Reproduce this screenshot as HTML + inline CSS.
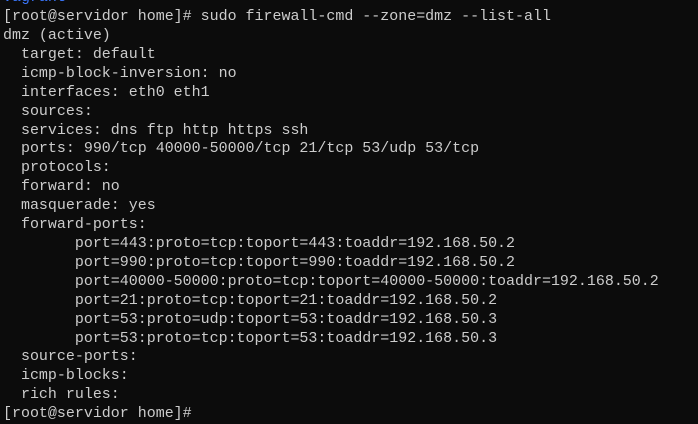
<!DOCTYPE html>
<html><head><style>
html,body{margin:0;padding:0;background:#0c0c0c;width:698px;height:422px;overflow:hidden}
pre{position:absolute;left:3px;top:-10.8px;margin:0;font-family:"Liberation Mono",monospace;font-size:14.98px;line-height:18.9px;color:#cccccc}
.b{color:#3b78ff}
</style></head><body>
<pre><span class="b">vagrant</span>
[root@servidor home]# sudo firewall-cmd --zone=dmz --list-all
dmz (active)
  target: default
  icmp-block-inversion: no
  interfaces: eth0 eth1
  sources:
  services: dns ftp http https ssh
  ports: 990/tcp 40000-50000/tcp 21/tcp 53/udp 53/tcp
  protocols:
  forward: no
  masquerade: yes
  forward-ports:
        port=443:proto=tcp:toport=443:toaddr=192.168.50.2
        port=990:proto=tcp:toport=990:toaddr=192.168.50.2
        port=40000-50000:proto=tcp:toport=40000-50000:toaddr=192.168.50.2
        port=21:proto=tcp:toport=21:toaddr=192.168.50.2
        port=53:proto=udp:toport=53:toaddr=192.168.50.3
        port=53:proto=tcp:toport=53:toaddr=192.168.50.3
  source-ports:
  icmp-blocks:
  rich rules:
[root@servidor home]#</pre>
</body></html>
